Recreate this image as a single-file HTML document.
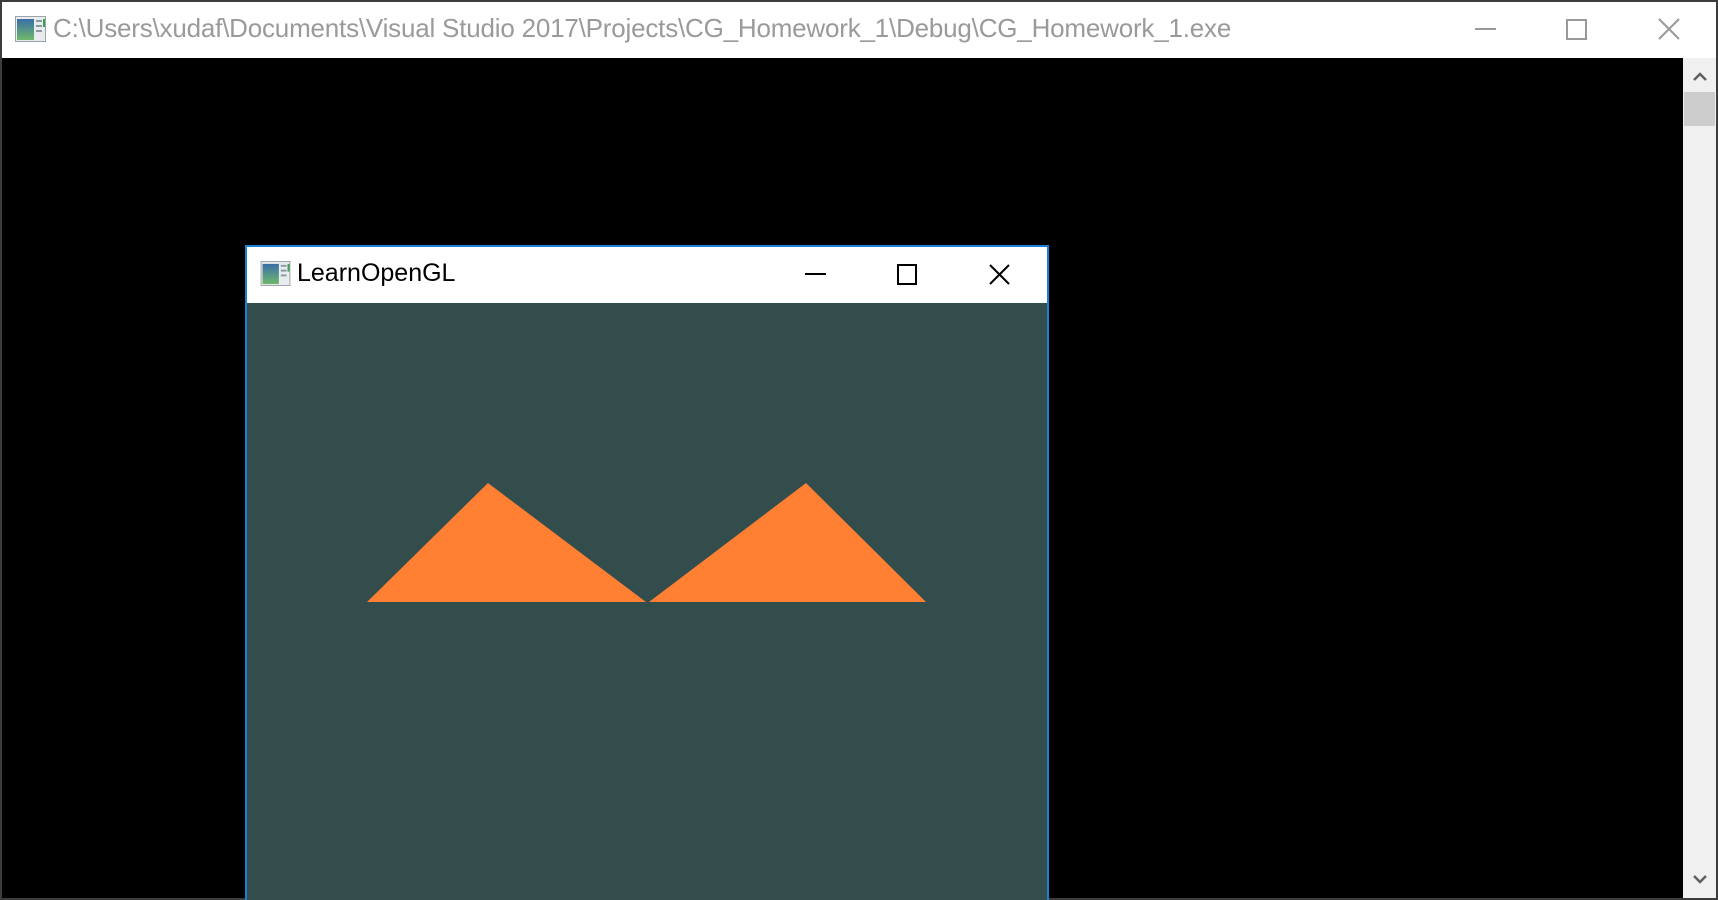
<!DOCTYPE html>
<html><head><meta charset="utf-8"><style>
html,body{margin:0;padding:0;overflow:hidden;width:1718px;height:900px;}
body{position:relative;background:#3c3c3c;font-family:"Liberation Sans",sans-serif;}
.abs{position:absolute;}
</style></head><body>
<div class="abs" style="left:2px;top:2px;width:1714px;height:56px;background:#fff;"></div>
<svg class="abs" style="left:15px;top:16px" width="31" height="26" viewBox="0 0 31 26">
<defs><linearGradient id="g" x1="0" y1="0" x2="0" y2="1"><stop offset="0" stop-color="#3a6ea8"/><stop offset="1" stop-color="#6fb86a"/></linearGradient></defs>
<rect x="0.5" y="0.5" width="30" height="25" fill="#e8ecee" stroke="#9aa3a8"/>
<rect x="2" y="3" width="17" height="21" fill="url(#g)"/>
<rect x="21" y="4" width="6" height="2" fill="#8a9aa2"/><rect x="21" y="9" width="6" height="2" fill="#8a9aa2"/><rect x="21" y="14" width="6" height="2" fill="#8a9aa2"/>
<rect x="28" y="3" width="2" height="8" fill="#3aa055"/>
</svg>
<div class="abs" style="left:53px;top:13px;font-size:26px;color:#9a9a9a;white-space:nowrap;letter-spacing:-0.2px;">C:\Users\xudaf\Documents\Visual Studio 2017\Projects\CG_Homework_1\Debug\CG_Homework_1.exe</div>
<div class="abs" style="left:1475px;top:28px;width:21px;height:2px;background:#999;"></div>
<div class="abs" style="left:1566px;top:19px;width:17px;height:17px;border:2px solid #999;"></div>
<svg class="abs" style="left:1658px;top:18px" width="22" height="22"><path d="M1 1L21 21M21 1L1 21" stroke="#999" stroke-width="2"/></svg>
<div class="abs" style="left:2px;top:58px;width:1681px;height:840px;background:#000;"></div>
<div class="abs" style="left:1683px;top:58px;width:33px;height:840px;background:#f0f0f0;"></div>
<svg class="abs" style="left:1692px;top:71px" width="16" height="12"><path d="M2 9L8 3L14 9" stroke="#606060" stroke-width="2.5" fill="none"/></svg>
<svg class="abs" style="left:1692px;top:873px" width="16" height="12"><path d="M2 3L8 9L14 3" stroke="#606060" stroke-width="2.5" fill="none"/></svg>
<div class="abs" style="left:1684px;top:92px;width:31px;height:34px;background:#cdcdcd;"></div>
<div class="abs" style="left:245px;top:245px;width:800px;height:653px;border:2px solid #1c7fd6;border-bottom:none;background:#334d4d;"></div>
<div class="abs" style="left:247px;top:247px;width:800px;height:56px;background:#fff;"></div>
<svg class="abs" style="left:260px;top:261px" width="31" height="25" viewBox="0 0 31 26">
<rect x="0.5" y="0.5" width="30" height="25" fill="#e8ecee" stroke="#9aa3a8"/>
<rect x="2" y="3" width="17" height="21" fill="url(#g)"/>
<rect x="21" y="4" width="6" height="2" fill="#8a9aa2"/><rect x="21" y="9" width="6" height="2" fill="#8a9aa2"/><rect x="21" y="14" width="6" height="2" fill="#8a9aa2"/>
<rect x="28" y="3" width="2" height="8" fill="#3aa055"/>
</svg>
<div class="abs" style="left:297px;top:259px;font-size:25px;color:#000;white-space:nowrap;">LearnOpenGL</div>
<div class="abs" style="left:805px;top:273px;width:21px;height:2px;background:#000;"></div>
<div class="abs" style="left:897px;top:264px;width:16px;height:17px;border:2px solid #000;"></div>
<svg class="abs" style="left:989px;top:264px" width="21" height="21"><path d="M1 1L20 20M20 1L1 20" stroke="#000" stroke-width="2"/></svg>
<svg class="abs" style="left:0;top:0" width="1718" height="900"><path d="M367 602L488 483L646 602Z M649 602L806 483L926 602Z" fill="#ff7f33"/></svg>
</body></html>
